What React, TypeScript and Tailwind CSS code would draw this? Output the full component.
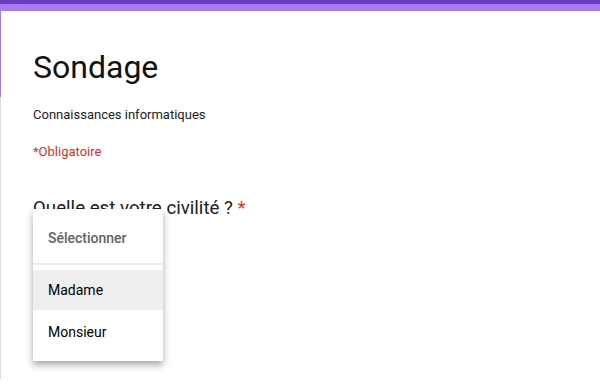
import React from "react";

const font = { fontFamily: "Roboto, 'Liberation Sans', sans-serif" };

export default function App() {
  return (
    <main className="relative h-[390px] w-[600px] overflow-hidden bg-white" style={font}>
      {/* Top colour bars */}
      <div className="h-[4px] bg-[#6a3cbc]" />
      <div className="h-[7px] bg-[#a779f5]" />

      {/* Header */}
      <div className="border-l border-[#a779f5] pl-[32px] pt-[36px] pb-[10px]">
        <h1 className="text-[32px] leading-[40px] text-[#111]">Sondage</h1>
      </div>

      {/* Body */}
      <div className="h-[282px] border-l border-[#dadce0] pl-[32px] pt-[8px]">
        <p className="text-[13px] leading-[20px] text-[#202124]">Connaissances informatiques</p>
        <p className="mt-[17px] text-[13px] leading-[20px] text-[#d93025]">*Obligatoire</p>

        <div className="relative mt-[34px]">
          <h2 className="text-[18.7px] leading-[24px] text-[#202124]">
            Quelle est votre civilité ? <span className="text-[#d93025]">*</span>
          </h2>

          {/* Open dropdown */}
          <div className="absolute left-0 top-[13px] w-[130px] bg-white pt-[9px] pb-[9px] shadow-[0_4px_7px_rgba(0,0,0,0.35)]">
            <div className="flex h-[40px] items-center px-[15px] text-[14px] font-medium text-[#5f6368]">
              Sélectionner
            </div>
            <div className="my-[5px] h-[2px] bg-[#ebebeb]" />
            <div className="flex h-[40px] items-center bg-[#eeeeee] px-[15px] text-[14px] text-[#000]">
              Madame
            </div>
            <div className="flex h-[42px] items-center px-[15px] pt-[2px] text-[14px] text-[#000]">
              Monsieur
            </div>
          </div>
        </div>
      </div>
    </main>
  );
}
